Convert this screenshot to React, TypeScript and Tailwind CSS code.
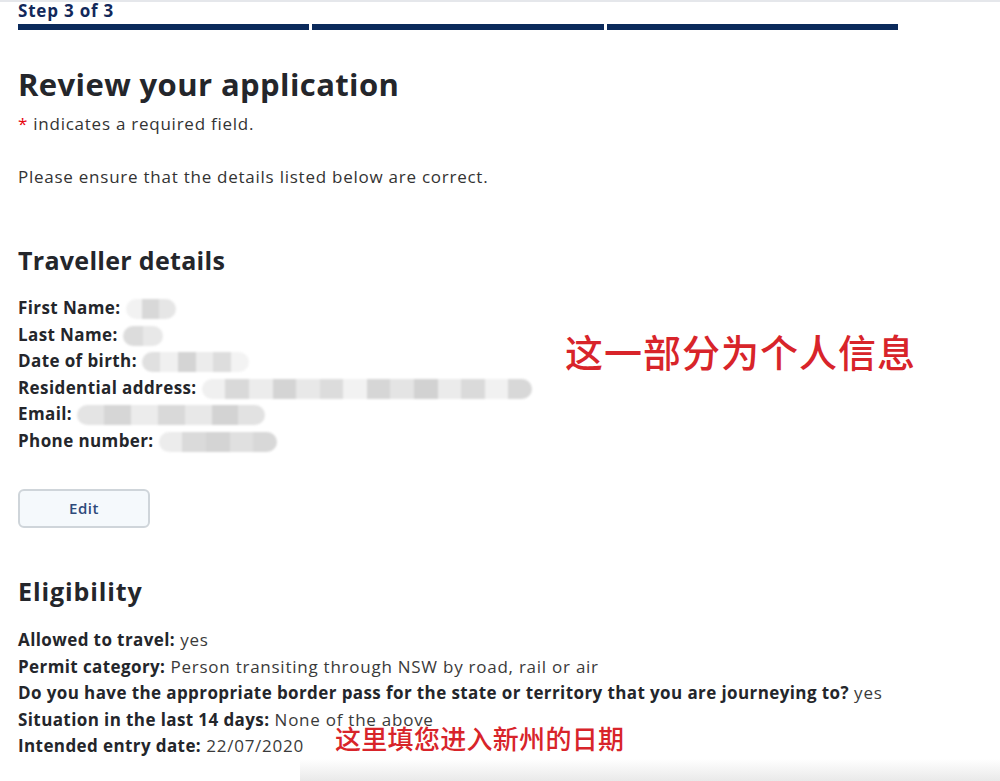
const Mosaic = ({ w, tones }: { w: number; tones: string[] }) => {
  return (
    <span className="inline-flex align-middle h-[20px] overflow-hidden rounded-full blur-[1.2px]" style={{ width: w }}>
      {tones.map((t, i) => (
        <span key={i} className="flex-1 h-full" style={{ background: t }} />
      ))}
    </span>
  );
};

const Row = ({ label, children }: { label: string; children?: React.ReactNode }) => (
  <p className="leading-[26.5px] text-[17px] text-[#3a3a3a] tracking-[0.75px] whitespace-nowrap">
    <span className="font-bold text-[#24262b] tracking-[0.4px]">{label}</span> {children}
  </p>
);

const App = () => {
  const cn = "font-['Noto_Sans_CJK_SC',sans-serif]";
  return (
    <div className="relative w-[1000px] h-[781px] overflow-hidden bg-white font-['Open_Sans',sans-serif] border-t-2 border-gray-200">
      <div className="px-[18px]">
        <p className="text-[17px] font-bold text-[#12285a] leading-[18px] tracking-[0.8px]">Step 3 of 3</p>
        <div className="flex gap-[3px] w-[880px] mt-[4px]">
          <div className="flex-1 h-[6px] bg-[#0b2a5b]" />
          <div className="flex-1 h-[6px] bg-[#0b2a5b]" />
          <div className="flex-1 h-[6px] bg-[#0b2a5b]" />
        </div>

        <h1 className="mt-[34px] text-[31px] font-bold text-[#24262b] leading-[40px] tracking-[0.4px]">Review your application</h1>
        <p className="mt-[8px] text-[17px] text-[#333] leading-[24px] tracking-[0.75px]">
          <span className="text-red-600">*</span> indicates a required field.
        </p>
        <p className="mt-[29px] text-[17px] text-[#333] leading-[24px] tracking-[0.75px]">Please ensure that the details listed below are correct.</p>

        <h2 className="mt-[55px] text-[25px] font-bold text-[#24262b] leading-[32px] tracking-[0.3px]">Traveller details</h2>
        <div className="flex mt-[19px]">
          <div className="w-[547px]">
            <Row label="First Name:">
              <Mosaic w={50} tones={["#f2f2f2", "#d8d8d8", "#e6e6e6"]} />
            </Row>
            <Row label="Last Name:">
              <Mosaic w={40} tones={["#dcdcdc", "#e8e8e8"]} />
            </Row>
            <Row label="Date of birth:">
              <Mosaic w={107} tones={["#e0e0e0", "#f0f0f0", "#d4d4d4", "#ececec", "#dddddd", "#f3f3f3"]} />
            </Row>
            <Row label="Residential address:">
              <Mosaic
                w={330}
                tones={["#f0f0f0", "#d9d9d9", "#ececec", "#d4d4d4", "#e8e8e8", "#dcdcdc", "#f2f2f2", "#d6d6d6", "#e4e4e4", "#d2d2d2", "#ebebeb", "#dadada", "#f1f1f1", "#d8d8d8"]}
              />
            </Row>
            <Row label="Email:">
              <Mosaic w={188} tones={["#e4e4e4", "#d6d6d6", "#ececec", "#d9d9d9", "#e8e8e8", "#d3d3d3", "#e2e2e2"]} />
            </Row>
            <Row label="Phone number:">
              <Mosaic w={118} tones={["#ececec", "#dadada", "#d4d4d4", "#e0e0e0", "#d8d8d8"]} />
            </Row>
          </div>
          <p className={`${cn} mt-[34px] text-[38px] font-medium leading-[44px] text-[#d8242a] tracking-[1px] whitespace-nowrap`}>这一部分为个人信息</p>
        </div>

        <button className="mt-[35px] w-[132px] h-[39px] rounded-[6px] border-2 border-[#cfd5da] bg-[#f5f9fc] text-[15px] font-semibold text-[#2e4a7a] tracking-[0.5px]">
          Edit
        </button>

        <h2 className="mt-[47px] text-[25px] font-bold text-[#24262b] leading-[32px] tracking-[0.9px]">Eligibility</h2>
        <div className="mt-[20px]">
          <Row label="Allowed to travel:">yes</Row>
          <Row label="Permit category:">Person transiting through NSW by road, rail or air</Row>
          <Row label="Do you have the appropriate border pass for the state or territory that you are journeying to?">yes</Row>
          <Row label="Situation in the last 14 days:">None of the above</Row>
          <div className="flex items-start">
            <Row label="Intended entry date:">22/07/2020</Row>
            <span className={`${cn} ml-[31px] -mt-[8px] text-[26px] font-medium leading-[26px] text-[#d8242a] tracking-[0.3px]`}>这里填您进入新州的日期</span>
          </div>
        </div>
      </div>
      <div className="absolute left-[300px] right-0 bottom-0 h-[22px] bg-gradient-to-b from-white to-[#e9e9e9]" />
    </div>
  );
};

export default App;
